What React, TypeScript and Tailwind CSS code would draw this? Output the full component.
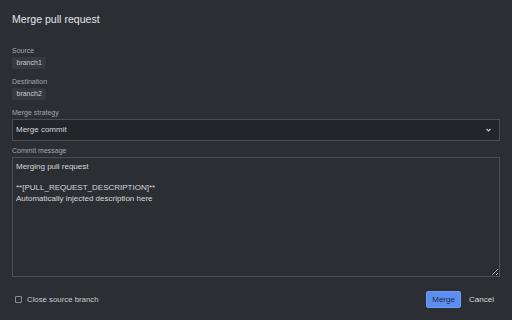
export default function App() {
  return (
    <div
      className="w-[512px] h-[320px] bg-[#2b2f34] text-[#d6d8db] px-3 flex flex-col overflow-hidden"
      style={{ fontFamily: "'Liberation Sans', Arial, sans-serif" }}
    >
      <h1 className="pt-[10px] text-[10.6px] leading-[18px] text-[#e4e6e8]">Merge pull request</h1>

      <div className="mt-[18px] text-[7px] leading-[10px] text-[#a3a7ac]">Source</div>
      <div className="mt-[1px] self-start h-[12px] px-[4.5px] rounded-[2px] bg-[#363a40] text-[7px] leading-[12px] text-[#c9ccd0]">
        branch1
      </div>

      <div className="mt-[8px] text-[7px] leading-[10px] text-[#a3a7ac]">Destination</div>
      <div className="mt-[1px] self-start h-[12px] px-[4.5px] rounded-[2px] bg-[#363a40] text-[7px] leading-[12px] text-[#c9ccd0]">
        branch2
      </div>

      <div className="mt-[8px] text-[7px] leading-[10px] text-[#a3a7ac]">Merge strategy</div>
      <div className="mt-[1px] h-[22px] border border-[#4a4e54] bg-[#222529] flex items-center justify-between pl-[3px] pr-[8px] text-[8px]">
        <span>Merge commit</span>
        <svg width="5" height="4" viewBox="0 0 5 4" className="text-[#c9ccd0]">
          <path d="M0.5 1 L2.5 3 L4.5 1" fill="none" stroke="currentColor" strokeWidth="1.1" />
        </svg>
      </div>

      <div className="mt-[5px] text-[7px] leading-[10px] text-[#a3a7ac]">Commit message</div>
      <textarea
        readOnly
        className="mt-[1px] h-[120px] border border-[#4a4e54] bg-[#2b2f34] px-[3px] pt-[4px] text-[8px] leading-[10.7px] text-[#d6d8db] outline-none [color-scheme:dark]"
        defaultValue={"Merging pull request\n\n**[PULL_REQUEST_DESCRIPTION]**\nAutomatically injected description here"}
      />

      <div className="mt-[14px] flex items-center">
        <span className="ml-[3px] w-[7px] h-[7px] border border-[#8a8e93] rounded-[1px]" />
        <span className="ml-[5px] text-[7.8px] text-[#c9ccd0]">Close source branch</span>
        <div className="ml-auto flex items-center">
          <button className="h-[17px] w-[35px] rounded-[2px] bg-[#5b8ef0] border border-[#6f9cf2] text-[8px] text-[#1d2a44]">
            Merge
          </button>
          <button className="ml-[2px] h-[17px] px-[6px] text-[8px] text-[#d6d8db]">Cancel</button>
        </div>
      </div>
    </div>
  );
}
